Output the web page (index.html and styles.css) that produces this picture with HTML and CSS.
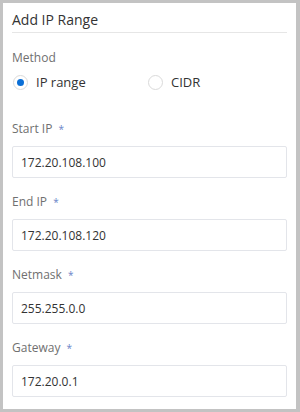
FILE: index.html
```html
<!DOCTYPE html>
<html lang="en">
<head>
  <meta charset="UTF-8">
  <meta name="viewport" content="width=device-width, initial-scale=1.0">
  <title>Add IP Range</title>
  <link rel="stylesheet" href="styles.css">
</head>
<body>
  <div class="panel">
    <div class="header">Add IP Range</div>

    <div class="label method-label">Method</div>
    <div class="radios">
      <label class="radio checked"><span class="dot"></span>IP range</label>
      <label class="radio"><span class="dot"></span>CIDR</label>
    </div>

    <div class="field first">
      <div class="label">Start IP <span class="req">*</span></div>
      <div class="input">172.20.108.100</div>
    </div>
    <div class="field">
      <div class="label">End IP <span class="req">*</span></div>
      <div class="input">172.20.108.120</div>
    </div>
    <div class="field">
      <div class="label">Netmask <span class="req">*</span></div>
      <div class="input">255.255.0.0</div>
    </div>
    <div class="field">
      <div class="label">Gateway <span class="req">*</span></div>
      <div class="input">172.20.0.1</div>
    </div>
  </div>
</body>
</html>
```

FILE: styles.css
```css
body {
  margin: 0;
  padding: 0;
  background: #c3c3c3;
  font-family: "Open Sans", "Noto Sans", Arial, sans-serif;
  color: #333;
}

.panel {
  margin: 3px 4px 0 3px;
  height: 406px;
  background: #fff;
  padding: 0 9px;
  box-sizing: border-box;
}

.header {
  height: 30px;
  padding-top: 4px;
  box-sizing: border-box;
  display: flex;
  align-items: center;
  font-size: 14px;
  color: #333;
  border-bottom: 1px solid #e6e6e6;
}

.label {
  font-size: 12px;
  line-height: 18px;
  color: #707070;
}

.method-label {
  margin-top: 16px;
}

.radios {
  display: flex;
  height: 30px;
  align-items: center;
}

.radio {
  display: flex;
  align-items: center;
  width: 135px;
  font-size: 13px;
  color: #333;
}

.radio .dot {
  width: 15px;
  height: 15px;
  margin: 0 8px 0 1px;
  border: 1px solid #dadada;
  border-radius: 50%;
  box-sizing: border-box;
  position: relative;
}

.radio.checked .dot::after {
  content: "";
  position: absolute;
  left: 3px;
  top: 3px;
  width: 7px;
  height: 7px;
  border-radius: 50%;
  background: #0b6fd6;
}

.field {
  margin-top: 15px;
}

.field.first {
  margin-top: 23px;
}

.req {
  color: #6a84c8;
  font-size: 10px;
  margin-left: 3px;
}

.input {
  margin-top: 8px;
  height: 32px;
  border: 1px solid #e3e5ea;
  border-radius: 2px;
  box-sizing: border-box;
  padding: 0 8px;
  display: flex;
  align-items: center;
  font-size: 12px;
  color: #333;
}
```
